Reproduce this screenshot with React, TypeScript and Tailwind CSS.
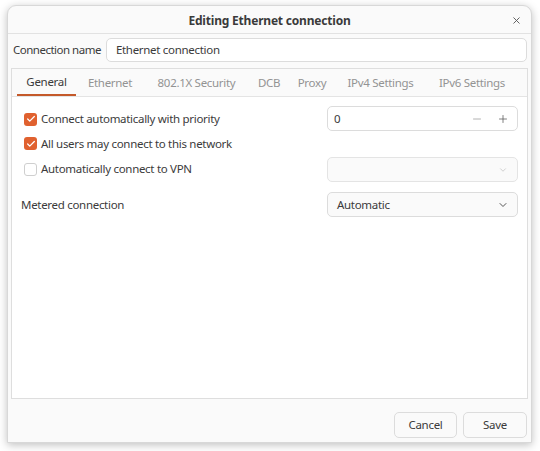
import { ChevronDown, Minus, Plus, X, Check } from "lucide-react";

const tabs = [
  { label: "General", w: "w-[59px]" },
  { label: "Ethernet", w: "w-[68px]" },
  { label: "802.1X Security", w: "w-[105px]" },
  { label: "DCB", w: "w-[40px]" },
  { label: "Proxy", w: "w-[46px]" },
  { label: "IPv4 Settings", w: "w-[91px]" },
  { label: "IPv6 Settings", w: "w-[92px]" },
];

function CheckRow({ checked, label }: { checked: boolean; label: string }) {
  return (
    <label className="flex items-center gap-[4px]">
      {checked ? (
        <span className="flex size-[13px] items-center justify-center rounded-[3px] bg-[#e0612f]">
          <Check className="size-[10px] text-white" strokeWidth={3} />
        </span>
      ) : (
        <span className="size-[13px] rounded-[3px] border border-[#cfcfcf] bg-white" />
      )}
      <span>{label}</span>
    </label>
  );
}

export default function App() {
  return (
    <div className="h-[451px] w-[540px] bg-white p-[5px_8px_8px_7px] font-['Noto_Sans',sans-serif] text-[11.5px] tracking-[-0.3px] text-[#3b3b3b]">
      <div className="flex h-[438px] flex-col rounded-t-[9px] border border-[#d8d8d8] bg-[#fafafa] shadow-[0_2px_8px_rgba(0,0,0,0.25)]">
        <div className="relative flex h-[28px] items-center justify-center border-b border-[#e2e2e2] pt-[2px]">
          <span className="text-[12px] font-bold tracking-[-0.2px] text-[#3a3a3a]">Editing Ethernet connection</span>
          <X className="absolute right-[9px] top-[9px] size-[11px] text-[#555]" strokeWidth={2} />
        </div>

        <div className="flex items-center gap-[5px] px-[4px] pt-[4px]">
          <span className="whitespace-nowrap pl-[1px] tracking-[-0.5px]">Connection name</span>
          <div className="flex h-[24px] flex-1 items-center rounded-[5px] border border-[#dcdcdc] bg-white px-[9px]">
            Ethernet connection
          </div>
        </div>

        <div className="mx-[3px] mt-[6px] flex h-[331px] flex-col border border-[#dedede] bg-white">
          <div className="flex h-[28px] items-stretch border-b border-[#e4e4e4] bg-[#fafafa] pl-[5px]">
            {tabs.map((t, i) => (
              <div
                key={t.label}
                className={
                  i === 0
                    ? `flex ${t.w} items-center justify-center whitespace-nowrap border-b-2 border-[#c4592a] pt-[1px] text-[#3b3b3b]`
                    : `flex ${t.w} items-center justify-center whitespace-nowrap pb-[1px] pt-[1px] text-[#939393]`
                }
              >
                {t.label}
              </div>
            ))}
          </div>

          <div className="flex flex-col px-[9px] pt-[9px]">
            <div className="flex h-[25px] items-center justify-between">
              <div className="pl-[3px] pt-[1px]">
                <CheckRow checked label="Connect automatically with priority" />
              </div>
              <div className="flex h-[25px] w-[191px] items-center rounded-[5px] border border-[#dcdcdc] bg-white pl-[6px] pr-[8px]">
                <span className="flex-1">0</span>
                <Minus className="mr-[14px] size-[12px] text-[#9a9a9a]" strokeWidth={1.5} />
                <Plus className="size-[12px] text-[#555]" strokeWidth={1.5} />
              </div>
            </div>
            <div className="flex h-[25px] items-center pl-[3px]">
              <CheckRow checked label="All users may connect to this network" />
            </div>
            <div className="flex h-[26px] items-center justify-between">
              <div className="pl-[3px]">
                <CheckRow checked={false} label="Automatically connect to VPN" />
              </div>
              <div className="mt-[1px] flex h-[25px] w-[191px] items-center justify-end rounded-[5px] border border-[#e4e4e4] bg-[#fafafa] pr-[9px]">
                <ChevronDown className="size-[10px] text-[#c8c8c8]" />
              </div>
            </div>
            <div className="mt-[10px] flex h-[25px] items-center justify-between">
              <span>Metered connection</span>
              <div className="flex h-[25px] w-[191px] items-center justify-between rounded-[5px] border border-[#dcdcdc] bg-[#fafafa] pl-[9px] pr-[8px]">
                <span>Automatic</span>
                <ChevronDown className="size-[12px] text-[#555]" />
              </div>
            </div>
          </div>
        </div>

        <div className="flex flex-1 items-center justify-end gap-[6px] pr-[4px] pt-[9px]">
          <button className="h-[26px] w-[63px] rounded-[5px] border border-[#dcdcdc] bg-[#fafafa] text-[#3b3b3b]">
            Cancel
          </button>
          <button className="h-[26px] w-[64px] rounded-[5px] border border-[#dcdcdc] bg-[#fafafa] text-[#3b3b3b]">
            Save
          </button>
        </div>
      </div>
    </div>
  );
}
